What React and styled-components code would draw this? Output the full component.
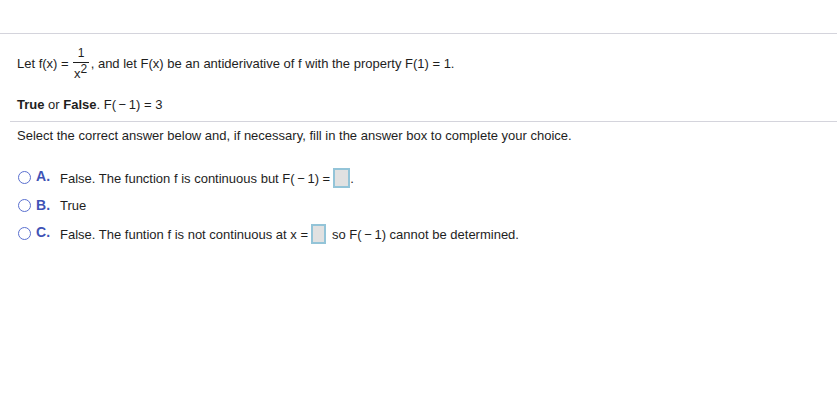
import React from 'react'
import styled, { createGlobalStyle } from 'styled-components'

const GlobalStyle = createGlobalStyle`
  html, body {
    margin: 0;
    padding: 0;
    background: #ffffff;
  }
  body {
    font-family: "Liberation Sans", Arial, sans-serif;
    font-size: 13px;
    color: #1e1e1e;
  }
`

const choices = [
  { letter: 'A', boxed: true },
  { letter: 'B', boxed: false },
  { letter: 'C', boxed: true }
]

// thin spaces around the minus sign, as the math renderer sets them
const minusOne = '(\u2009−\u20091)'

export default class App extends React.Component {
  renderChoice(letter) {
    if (letter === 'A') {
      return (
        <ChoiceText $boxed>
          False. The function f is continuous but F{minusOne} =
          <AnswerBox $w={17} />.
        </ChoiceText>
      )
    }
    if (letter === 'B') {
      return <ChoiceText>True</ChoiceText>
    }
    return (
      <ChoiceText $boxed>
        False. The funtion f is not continuous at x =
        <AnswerBox $w={15} />
        <After>so F{minusOne} cannot be determined.</After>
      </ChoiceText>
    )
  }

  render() {
    return (
      <Page>
        <GlobalStyle />
        <TopRule />
        <Prompt>
          <StatementLine>
            Let f(x) =
            <Fraction>
              <Numer>1</Numer>
              <Denom>
                x<Sup>2</Sup>
              </Denom>
            </Fraction>
            , and let F(x) be an antiderivative of f with the property F(1) = 1.
          </StatementLine>
          <QuestionLine>
            <b>True</b> or <b>False</b>. F{minusOne} = 3
          </QuestionLine>
        </Prompt>
        <Divider />
        <Instruction>
          Select the correct answer below and, if necessary, fill in the answer box to complete your choice.
        </Instruction>
        <Choices>
          {choices.map(c => (
            <ChoiceRow key={c.letter}>
              <Radio />
              <Letter $boxed={c.boxed}>{c.letter}.</Letter>
              {this.renderChoice(c.letter)}
            </ChoiceRow>
          ))}
        </Choices>
      </Page>
    )
  }
}

const Page = styled.div`
  padding-top: 33px;
  min-height: 385px;
  background: #fff;
`

const TopRule = styled.div`
  height: 0;
  border-top: 1px solid #d4d4dc;
`

const Prompt = styled.div`
  padding-left: 17px;
`

const StatementLine = styled.div`
  display: flex;
  align-items: center;
  white-space: pre;
  height: 35px;
  margin-top: 12px;
`

const Fraction = styled.span`
  display: inline-flex;
  flex-direction: column;
  align-items: stretch;
  width: 16px;
  margin: 0 2px 0 4px;
  font-size: 12px;
  text-align: center;
`

const Numer = styled.span`
  line-height: 13px;
  padding-bottom: 2px;
  padding-left: 1px;
`

const Denom = styled.span`
  border-top: 1px solid #1e1e1e;
  line-height: 13px;
  padding-top: 4px;
  font-size: 13px;
  white-space: nowrap;
`

const Sup = styled.sup`
  font-size: 12px;
  line-height: 0;
  vertical-align: 5px;
`

const QuestionLine = styled.div`
  line-height: 16px;
  margin-top: 16px;
  white-space: pre;
  b {
    font-weight: bold;
  }
`

const Divider = styled.div`
  margin: 8px 0 0 10px;
  border-top: 1px solid #d4d4dc;
`

const Instruction = styled.div`
  padding-left: 17px;
  margin-top: 6px;
  line-height: 16px;
`

const Choices = styled.div`
  margin-top: 19px;
  padding-left: 18px;
`

const ChoiceRow = styled.div`
  display: flex;
  align-items: center;
  height: 28px;
`

const Radio = styled.span`
  box-sizing: border-box;
  width: 13px;
  height: 13px;
  border: 1.6px solid #5a70cf;
  border-radius: 50%;
`

const Letter = styled.span`
  width: 24px;
  padding-left: 5px;
  font-size: 14px;
  font-weight: bold;
  color: #3f53b6;
  margin-bottom: ${p => (p.$boxed ? 3 : 0)}px;
`

const ChoiceText = styled.span`
  display: flex;
  align-items: center;
  white-space: pre;
  padding-top: ${p => (p.$boxed ? 2 : 0)}px;
`

const AnswerBox = styled.span`
  box-sizing: border-box;
  display: inline-block;
  width: ${p => p.$w}px;
  height: 20px;
  margin-left: 3px;
  background: #e1e1e1;
  border: 2px solid #93c4d8;
`

const After = styled.span`
  margin-left: 6px;
`
